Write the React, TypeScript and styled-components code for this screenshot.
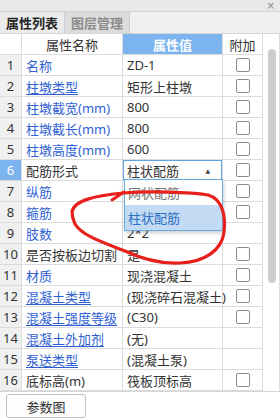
import styled, { createGlobalStyle } from 'styled-components';

const GlobalStyle = createGlobalStyle`
  html, body {
    margin: 0;
    padding: 0;
    background: #ffffff;
  }
  body {
    font-family: "Noto Sans", "Noto Sans CJK SC", sans-serif;
    font-size: 13px;
    color: #333;
  }
  * { box-sizing: border-box; }
`;

const Panel = styled.div`
  position: relative;
  width: 280px;
  height: 420px;
  display: flex;
  flex-direction: column;
  background: #fff;
  overflow: hidden;
`;

const TopStrip = styled.div`
  height: 12px;
  background: #e8e8e8;
  border-bottom: 1px solid #d4d4d4;
  display: flex;
  justify-content: flex-end;
  align-items: center;
  padding-right: 5px;
`;

const CloseMark = styled.span`
  font-size: 10px;
  line-height: 10px;
  color: #8a8a8a;
  font-family: "DejaVu Sans", sans-serif;
`;

const TabBar = styled.div`
  height: 22px;
  display: flex;
  background: #f0f0f0;
  border-bottom: 1px solid #d6d6d6;
`;

const Tab = styled.div<{ $active?: boolean }>`
  width: 65px;
  display: flex;
  align-items: center;
  justify-content: center;
  font-size: 13px;
  font-weight: 700;
  color: ${(p) => (p.$active ? '#262626' : '#8c8c8c')};
  background: ${(p) => (p.$active ? '#ebebeb' : '#dcdcdc')};
  border-right: 1px solid #cfcfcf;
  font-family: "Noto Sans CJK SC", sans-serif;
`;

const TableArea = styled.div`
  display: flex;
  border-bottom: 1px solid #d6d6d6;
`;

const Table = styled.div`
  width: 263px;
  display: flex;
  flex-direction: column;
`;

const Row = styled.div`
  display: grid;
  grid-template-columns: 22px 101px 100px 40px;
  height: 21px;
`;

const Cell = styled.div`
  position: relative;
  display: flex;
  align-items: center;
  border-right: 1px solid #dcdcdc;
  border-bottom: 1px solid #dcdcdc;
  white-space: nowrap;
  font-family: "Noto Sans", "Noto Sans CJK SC", sans-serif;
  font-size: 13px;
`;

const NumCell = styled(Cell)<{ $selected?: boolean; $head?: boolean }>`
  justify-content: center;
  background: ${(p) => (p.$head ? '#fff' : p.$selected ? '#7cb4f0' : '#f0f0f0')};
  color: ${(p) => (p.$selected ? '#fff' : '#333')};
`;

const HeadCell = styled(Cell)<{ $blue?: boolean }>`
  justify-content: center;
  background: ${(p) => (p.$blue ? '#7cb4f0' : '#fff')};
  color: ${(p) => (p.$blue ? '#fff' : '#333')};
  font-weight: ${(p) => (p.$blue ? 700 : 400)};
`;

const NameCell = styled(Cell)<{ $tone: 'link' | 'underline' | 'plain' }>`
  padding-left: 4px;
  color: ${(p) => (p.$tone === 'plain' ? '#333' : '#2f5fd3')};
  text-decoration: ${(p) => (p.$tone === 'underline' ? 'underline' : 'none')};
  text-underline-offset: 2px;
`;

const ValueCell = styled(Cell)`
  padding-left: 4px;
  color: #333;
`;

const CheckCell = styled(Cell)`
  justify-content: center;
`;

const Check = styled.span`
  width: 14px;
  height: 14px;
  border: 1px solid #8c8c8c;
  border-radius: 2px;
  background: #fff;
  margin-left: 1px;
`;

const SelectBox = styled.div`
  position: absolute;
  inset: 0 0 0 0;
  border: 1px solid #5fa3e4;
  background: #fff;
  display: flex;
  align-items: center;
  justify-content: space-between;
  padding: 0 11px 0 3px;
  z-index: 2;
`;

const Caret = styled.span`
  font-size: 6px;
  color: #444;
  font-family: "DejaVu Sans", sans-serif;
`;

const DropList = styled.div`
  position: absolute;
  top: 19px;
  left: 1px;
  width: 99px;
  background: #fff;
  border: 1px solid #6aaae2;
  box-shadow: 1px 2px 4px rgba(0, 0, 0, 0.2);
  z-index: 3;
  display: flex;
  flex-direction: column;
`;

const DropItem = styled.div<{ $hover?: boolean }>`
  height: 25px;
  display: flex;
  align-items: center;
  padding-left: 3px;
  font-size: 13px;
  color: ${(p) => (p.$hover ? '#2b6fc2' : '#777')};
  background: ${(p) => (p.$hover ? '#c2daf3' : '#fff')};
`;

const ScrollTrack = styled.div`
  width: 17px;
  background: #fff;
  border-right: 1px solid #dedede;
  padding: 15px 4px 0 5px;
`;

const Thumb = styled.div`
  width: 8px;
  height: 234px;
  border-radius: 4px;
  background: #cdcdcd;
`;

const Footer = styled.div`
  padding: 2px 6px;
`;

const Button = styled.button`
  width: 80px;
  height: 24px;
  border: 1px solid #c2c2c2;
  border-radius: 3px;
  background: #fdfdfd;
  color: #333;
  font-size: 13px;
  font-family: "Noto Sans CJK SC", sans-serif;
  padding: 0;
`;

const Scribble = styled.svg`
  position: absolute;
  top: 0;
  left: 0;
  pointer-events: none;
  z-index: 5;
`;

type Tone = 'link' | 'underline' | 'plain';

const rows: { name: string; value: string; tone: Tone; check: boolean; select?: boolean }[] = [
  { name: '名称', value: 'ZD-1', tone: 'link', check: true },
  { name: '柱墩类型', value: '矩形上柱墩', tone: 'underline', check: true },
  { name: '柱墩截宽(mm)', value: '800', tone: 'link', check: true },
  { name: '柱墩截长(mm)', value: '800', tone: 'link', check: true },
  { name: '柱墩高度(mm)', value: '600', tone: 'link', check: true },
  { name: '配筋形式', value: '柱状配筋', tone: 'plain', check: true, select: true },
  { name: '纵筋', value: '', tone: 'link', check: true },
  { name: '箍筋', value: '', tone: 'link', check: true },
  { name: '肢数', value: '2*2', tone: 'link', check: false },
  { name: '是否按板边切割', value: '是', tone: 'plain', check: true },
  { name: '材质', value: '现浇混凝土', tone: 'link', check: true },
  { name: '混凝土类型', value: '(现浇碎石混凝土)', tone: 'underline', check: true },
  { name: '混凝土强度等级', value: '(C30)', tone: 'underline', check: true },
  { name: '混凝土外加剂', value: '(无)', tone: 'underline', check: false },
  { name: '泵送类型', value: '(混凝土泵)', tone: 'underline', check: false },
  { name: '底标高(m)', value: '筏板顶标高', tone: 'plain', check: true },
];

export default function App() {
  return (
    <Panel>
      <GlobalStyle />
      <TopStrip>
        <CloseMark>×</CloseMark>
      </TopStrip>
      <TabBar>
        <Tab $active>属性列表</Tab>
        <Tab>图层管理</Tab>
      </TabBar>
      <TableArea>
        <Table>
          <Row>
            <NumCell $head />
            <HeadCell>属性名称</HeadCell>
            <HeadCell $blue>属性值</HeadCell>
            <HeadCell>附加</HeadCell>
          </Row>
          {rows.map((r, i) => (
            <Row key={r.name}>
              <NumCell $selected={!!r.select}>{i + 1}</NumCell>
              <NameCell $tone={r.tone}>{r.name}</NameCell>
              <ValueCell>
                {r.select ? (
                  <>
                    <SelectBox>
                      <span>{r.value}</span>
                      <Caret>▲</Caret>
                    </SelectBox>
                    <DropList>
                      <DropItem>网状配筋</DropItem>
                      <DropItem $hover>柱状配筋</DropItem>
                    </DropList>
                  </>
                ) : (
                  r.value
                )}
              </ValueCell>
              <CheckCell>{r.check && <Check />}</CheckCell>
            </Row>
          ))}
        </Table>
        <ScrollTrack>
          <Thumb />
        </ScrollTrack>
      </TableArea>
      <Footer>
        <Button>参数图</Button>
      </Footer>
      <Scribble width="280" height="420" viewBox="0 0 280 420">
        <path
          d="M72 212 C74 200, 95 196, 123 193 C150 191, 190 192, 208 195 C222 199, 226 215, 224 232 C222 250, 205 262, 180 263 C160 264, 140 258, 125 251 C105 243, 82 236, 75 224 C72 218, 72 214, 72 211"
          stroke="#e8201c"
          strokeWidth="3.2"
          fill="none"
          strokeLinecap="round"
        />
        <path d="M112 200 L124 192" stroke="#e8201c" strokeWidth="3" fill="none" strokeLinecap="round" />
      </Scribble>
    </Panel>
  );
}
